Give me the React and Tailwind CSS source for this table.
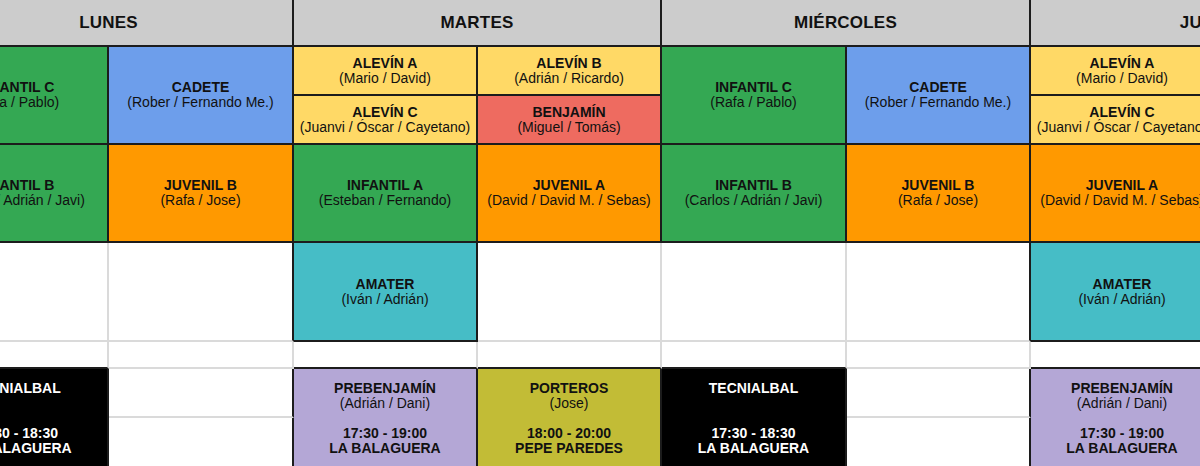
const bg = {
  grey: "bg-[#cccccc]",
  green: "bg-[#34a853]",
  blue: "bg-[#6d9eeb]",
  yellow: "bg-[#ffd966]",
  red: "bg-[#ee6b60]",
  orange: "bg-[#ff9900]",
  teal: "bg-[#46bdc6]",
  purple: "bg-[#b4a7d6]",
  olive: "bg-[#c2bc36]",
  black: "bg-black text-white",
  white: "bg-white",
};

// right / bottom border colours, written out so Tailwind picks them up
const rb = {
  dd: "border-r-2 border-b-2 border-r-[#1c1c1c] border-b-[#1c1c1c]",
  dl: "border-r-2 border-b-2 border-r-[#1c1c1c] border-b-[#dadada]",
  ld: "border-r-2 border-b-2 border-r-[#dadada] border-b-[#1c1c1c]",
  ll: "border-r-2 border-b-2 border-r-[#dadada] border-b-[#dadada]",
};

// team block: bold name + coaches
const team = (name, who) => [
  { t: name, b: true },
  { t: who },
];

// evening block: name, coaches (or blank), blank, time, place
const late = (name, who, time, place) => [
  { t: name, b: true },
  who ? { t: who } : null,
  null,
  { t: time, b: true },
  { t: place, b: true },
];

const cells = [
  // header
  { pos: "col-start-1 col-span-2 row-start-1", c: "grey", br: "dd", head: "LUNES" },
  { pos: "col-start-3 col-span-2 row-start-1", c: "grey", br: "dd", head: "MARTES" },
  { pos: "col-start-5 col-span-2 row-start-1", c: "grey", br: "dd", head: "MIÉRCOLES" },
  { pos: "col-start-7 col-span-2 row-start-1", c: "grey", br: "dd", head: "JUEVES" },

  // first block
  { pos: "col-start-1 row-start-2 row-span-2", c: "green", br: "dd", lines: team("INFANTIL C", "(Rafa / Pablo)") },
  { pos: "col-start-2 row-start-2 row-span-2", c: "blue", br: "dd", lines: team("CADETE", "(Rober / Fernando Me.)") },
  { pos: "col-start-3 row-start-2", c: "yellow", br: "dd", lines: team("ALEVÍN A", "(Mario / David)") },
  { pos: "col-start-4 row-start-2", c: "yellow", br: "dd", lines: team("ALEVÍN B", "(Adrián / Ricardo)") },
  { pos: "col-start-3 row-start-3", c: "yellow", br: "dd", lines: team("ALEVÍN C", "(Juanvi / Óscar / Cayetano)") },
  { pos: "col-start-4 row-start-3", c: "red", br: "dd", lines: team("BENJAMÍN", "(Miguel / Tomás)") },
  { pos: "col-start-5 row-start-2 row-span-2", c: "green", br: "dd", lines: team("INFANTIL C", "(Rafa / Pablo)") },
  { pos: "col-start-6 row-start-2 row-span-2", c: "blue", br: "dd", lines: team("CADETE", "(Rober / Fernando Me.)") },
  { pos: "col-start-7 row-start-2", c: "yellow", br: "dd", lines: team("ALEVÍN A", "(Mario / David)") },
  { pos: "col-start-8 row-start-2", c: "yellow", br: "dd", lines: team("ALEVÍN B", "(Adrián / Ricardo)") },
  { pos: "col-start-7 row-start-3", c: "yellow", br: "dd", lines: team("ALEVÍN C", "(Juanvi / Óscar / Cayetano)") },
  { pos: "col-start-8 row-start-3", c: "red", br: "dd", lines: team("BENJAMÍN", "(Miguel / Tomás)") },

  // second block
  { pos: "col-start-1 row-start-4", c: "green", br: "dd", lines: team("INFANTIL B", "(Carlos / Adrián / Javi)") },
  { pos: "col-start-2 row-start-4", c: "orange", br: "dd", lines: team("JUVENIL B", "(Rafa / Jose)") },
  { pos: "col-start-3 row-start-4", c: "green", br: "dd", lines: team("INFANTIL A", "(Esteban / Fernando)") },
  { pos: "col-start-4 row-start-4", c: "orange", br: "dd", lines: team("JUVENIL A", "(David / David M. / Sebas)") },
  { pos: "col-start-5 row-start-4", c: "green", br: "dd", lines: team("INFANTIL B", "(Carlos / Adrián / Javi)") },
  { pos: "col-start-6 row-start-4", c: "orange", br: "dd", lines: team("JUVENIL B", "(Rafa / Jose)") },
  { pos: "col-start-7 row-start-4", c: "orange", br: "dd", lines: team("JUVENIL A", "(David / David M. / Sebas)") },
  { pos: "col-start-8 row-start-4", c: "green", br: "dd", lines: team("INFANTIL A", "(Esteban / Fernando)") },

  // amater row
  { pos: "col-start-1 row-start-5", c: "white", br: "ll" },
  { pos: "col-start-2 row-start-5", c: "white", br: "dl" },
  { pos: "col-start-3 row-start-5", c: "teal", br: "dd", lines: team("AMATER", "(Iván / Adrián)") },
  { pos: "col-start-4 row-start-5", c: "white", br: "ll" },
  { pos: "col-start-5 row-start-5", c: "white", br: "ll" },
  { pos: "col-start-6 row-start-5", c: "white", br: "dl" },
  { pos: "col-start-7 row-start-5", c: "teal", br: "dd", lines: team("AMATER", "(Iván / Adrián)") },
  { pos: "col-start-8 row-start-5", c: "white", br: "ll" },

  // thin spacer row
  { pos: "col-start-1 row-start-6", c: "white", br: "ld" },
  { pos: "col-start-2 row-start-6", c: "white", br: "ll" },
  { pos: "col-start-3 row-start-6", c: "white", br: "ld" },
  { pos: "col-start-4 row-start-6", c: "white", br: "ld" },
  { pos: "col-start-5 row-start-6", c: "white", br: "ld" },
  { pos: "col-start-6 row-start-6", c: "white", br: "ll" },
  { pos: "col-start-7 row-start-6", c: "white", br: "ld" },
  { pos: "col-start-8 row-start-6", c: "white", br: "ld" },

  // evening sessions
  { pos: "col-start-1 row-start-7 row-span-2", c: "black", br: "dd", lines: late("TECNIALBAL", null, "17:30 - 18:30", "LA BALAGUERA") },
  { pos: "col-start-2 row-start-7", c: "white", br: "dl" },
  { pos: "col-start-2 row-start-8", c: "white", br: "dl" },
  { pos: "col-start-3 row-start-7 row-span-2", c: "purple", br: "dd", lines: late("PREBENJAMÍN", "(Adrián / Dani)", "17:30 - 19:00", "LA BALAGUERA") },
  { pos: "col-start-4 row-start-7 row-span-2", c: "olive", br: "dd", lines: late("PORTEROS", "(Jose)", "18:00 - 20:00", "PEPE PAREDES") },
  { pos: "col-start-5 row-start-7 row-span-2", c: "black", br: "dd", lines: late("TECNIALBAL", null, "17:30 - 18:30", "LA BALAGUERA") },
  { pos: "col-start-6 row-start-7", c: "white", br: "dl" },
  { pos: "col-start-6 row-start-8", c: "white", br: "dl" },
  { pos: "col-start-7 row-start-7 row-span-2", c: "purple", br: "dd", lines: late("PREBENJAMÍN", "(Adrián / Dani)", "17:30 - 19:00", "LA BALAGUERA") },
  { pos: "col-start-8 row-start-7 row-span-2", c: "olive", br: "dd", lines: late("PORTEROS", "(Jose)", "18:00 - 20:00", "PEPE PAREDES") },
];

const Cell = ({ cell }) => {
  const lines = cell.lines || [];
  return (
    <div
      className={`${cell.pos} ${bg[cell.c]} ${rb[cell.br]} flex flex-col items-center justify-center text-center overflow-hidden whitespace-nowrap`}
    >
      {cell.head && (
        <span className="text-[17px] font-bold tracking-[0.2px] text-[#111]">{cell.head}</span>
      )}
      {lines.map((l, i) =>
        l === null ? (
          <div key={i} className="h-[15px]" />
        ) : (
          <div
            key={i}
            className={`text-[14px] leading-[15px] ${l.b ? "font-bold" : "font-normal"} ${
              cell.c === "black" ? "text-white" : "text-[#111]"
            }`}
          >
            {l.t}
          </div>
        )
      )}
    </div>
  );
};

export default function App() {
  return (
    <div className="w-[1200px] h-[466px] overflow-hidden bg-white font-['Liberation_Sans',Arial,sans-serif]">
      <div className="ml-[-75px] grid grid-cols-[184px_185px_184px_184px_185px_184px_184px_184px] grid-rows-[47px_49px_49px_98px_99px_27px_49px_51px]">
        {cells.map((cell, i) => (
          <Cell key={i} cell={cell} />
        ))}
      </div>
    </div>
  );
}
